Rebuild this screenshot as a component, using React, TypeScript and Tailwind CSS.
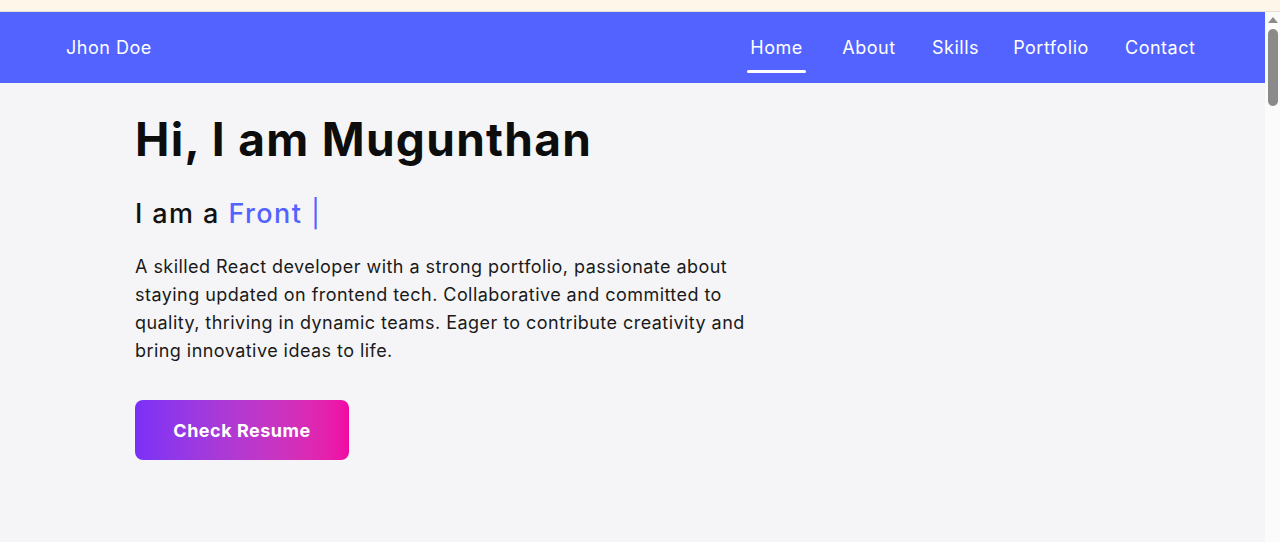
import React from "react";

export default function App() {
  const font = { fontFamily: "Inter, 'Noto Sans', sans-serif" };
  return (
    <div className="w-[1280px] h-[542px] overflow-hidden flex flex-col bg-[#fdf6e9]" style={font}>
      <div className="h-[12px] bg-[#fdf6e9] border-b border-[#eadfcc]" />
      <div className="flex flex-1 min-h-0">
        <div className="flex-1 flex flex-col bg-[#f5f5f7]">
          <nav className="h-[71px] bg-[#5263ff] flex items-center justify-between pl-[66px] pr-[70px]">
            <span className="text-white text-[18px] tracking-[0.5px]">Jhon Doe</span>
            <ul className="flex items-center gap-[35.5px] text-white text-[18px] tracking-[0.5px]">
              <li className="relative w-[59px] text-center">
                Home
                <span className="absolute left-0 right-0 top-[36px] h-[3px] bg-white rounded-full" />
              </li>
              <li className="w-[55px] text-center">About</li>
              <li className="w-[45px] text-center">Skills</li>
              <li className="w-[77px] text-center">Portfolio</li>
              <li className="w-[70px] text-center">Contact</li>
            </ul>
          </nav>
          <main className="pl-[135px] pt-[28px]">
            <h1 className="text-[46px] leading-[56px] font-bold text-[#0d0d0d] tracking-[1.3px]">Hi, I am Mugunthan</h1>
            <h2 className="mt-[29px] text-[27px] leading-[36px] font-medium text-[#111] tracking-[1.4px]">
              I am a <span className="text-[#5263ff]">Front <span className="font-normal">|</span></span>
            </h2>
            <p className="mt-[21px] text-[18px] leading-[28px] text-[#1a1a1a] tracking-[0.45px]">
              <span className="block whitespace-nowrap">A skilled React developer with a strong portfolio, passionate about</span>
              <span className="block whitespace-nowrap">staying updated on frontend tech. Collaborative and committed to</span>
              <span className="block whitespace-nowrap">quality, thriving in dynamic teams. Eager to contribute creativity and</span>
              <span className="block whitespace-nowrap">bring innovative ideas to life.</span>
            </p>
            <button className="mt-[35px] w-[214px] h-[60px] rounded-[8px] bg-gradient-to-r from-[#7b2ff7] to-[#f107a3] text-white text-[18px] font-bold tracking-[0.5px]">
              Check Resume
            </button>
          </main>
        </div>
        <div className="w-[15px] bg-[#fbfbfb] flex flex-col items-center pt-[5px]">
          <div className="w-0 h-0 border-l-[5px] border-r-[5px] border-b-[6px] border-l-transparent border-r-transparent border-b-[#8a8a8a]" />
          <div className="mt-[6px] w-[10px] h-[77px] rounded-full bg-[#8a8a8a]" />
        </div>
      </div>
    </div>
  );
}
